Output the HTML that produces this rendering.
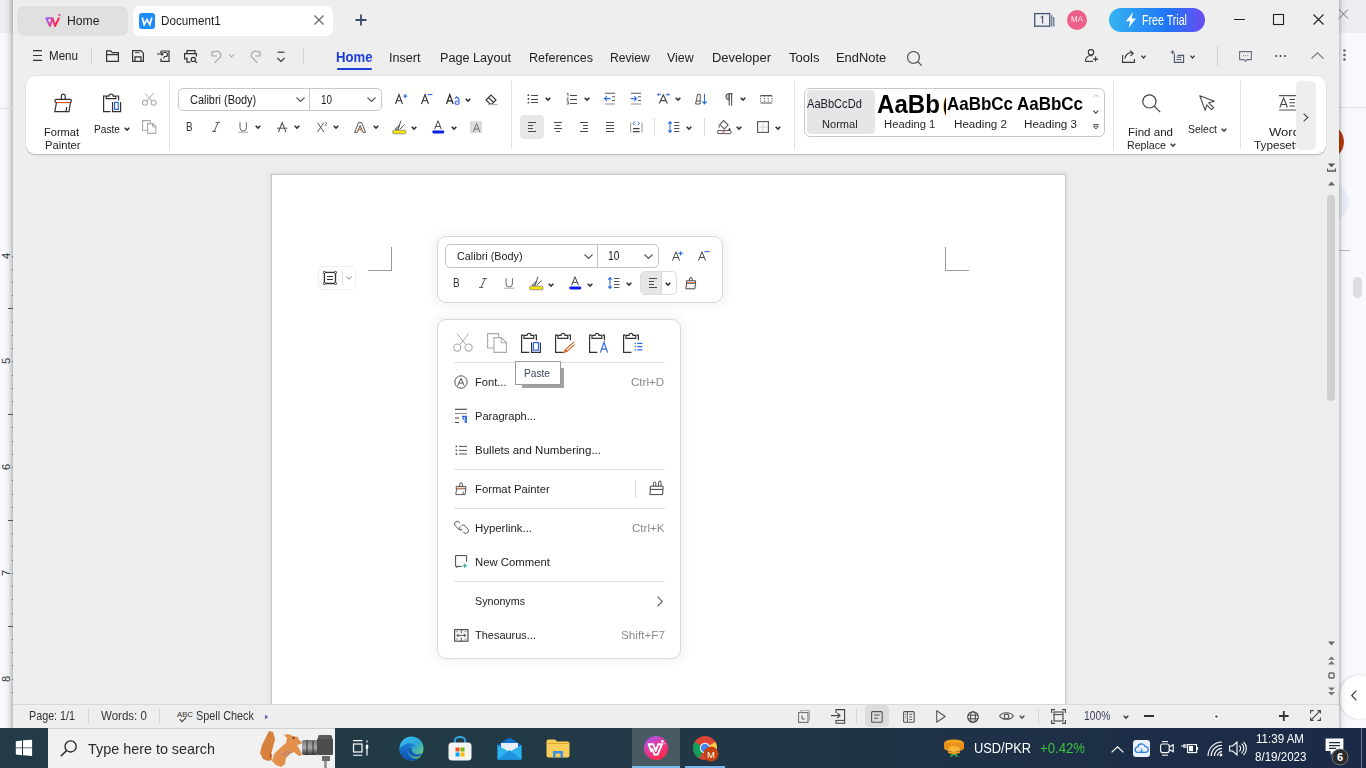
<!DOCTYPE html>
<html><head><meta charset="utf-8"><title>WPS Writer</title>
<style>
*{box-sizing:border-box;margin:0;padding:0}
html,body{width:1366px;height:768px;overflow:hidden;background:#fff;font-family:"Liberation Sans",sans-serif;color:#262626}
.a{position:absolute}
.t{position:absolute;white-space:nowrap;line-height:1;transform-origin:0 0}
svg{position:absolute;overflow:visible}

</style></head><body>
<div class="a" style="left:0px;top:0px;width:13px;height:728px;background:#f8f9fc"></div>
<div class="a" style="left:0px;top:0px;width:13px;height:33px;background:#eceef1"></div>
<div class="a" style="left:1339px;top:0px;width:27px;height:728px;background:#f8f9fc"></div>
<div class="a" style="left:1339px;top:0px;width:27px;height:33px;background:#eceef1"></div>
<div class="a" style="left:4px;top:0px;width:9px;height:728px;background:linear-gradient(90deg,rgba(0,0,0,0),rgba(0,0,0,0.05) 50%,rgba(0,0,0,0.24))"></div>
<div class="a" style="left:12px;top:255.5px;width:1.3px;height:1.3px;background:#444;border-radius:50%"></div>
<div class="a" style="left:12px;top:268.5px;width:1.3px;height:1.3px;background:#444;border-radius:50%"></div>
<div class="a" style="left:12px;top:281.5px;width:1.3px;height:1.3px;background:#444;border-radius:50%"></div>
<div class="a" style="left:12px;top:294.5px;width:1.3px;height:1.3px;background:#444;border-radius:50%"></div>
<div class="a" style="left:8px;top:308px;width:5px;height:1px;background:#555"></div>
<div class="a" style="left:12px;top:321.5px;width:1.3px;height:1.3px;background:#444;border-radius:50%"></div>
<div class="a" style="left:12px;top:334.5px;width:1.3px;height:1.3px;background:#444;border-radius:50%"></div>
<div class="a" style="left:12px;top:347.5px;width:1.3px;height:1.3px;background:#444;border-radius:50%"></div>
<div class="a" style="left:12px;top:360.5px;width:1.3px;height:1.3px;background:#444;border-radius:50%"></div>
<div class="a" style="left:12px;top:374.5px;width:1.3px;height:1.3px;background:#444;border-radius:50%"></div>
<div class="a" style="left:12px;top:387.5px;width:1.3px;height:1.3px;background:#444;border-radius:50%"></div>
<div class="a" style="left:12px;top:400.5px;width:1.3px;height:1.3px;background:#444;border-radius:50%"></div>
<div class="a" style="left:8px;top:414px;width:5px;height:1px;background:#555"></div>
<div class="a" style="left:12px;top:426.5px;width:1.3px;height:1.3px;background:#444;border-radius:50%"></div>
<div class="a" style="left:12px;top:440.5px;width:1.3px;height:1.3px;background:#444;border-radius:50%"></div>
<div class="a" style="left:12px;top:453.5px;width:1.3px;height:1.3px;background:#444;border-radius:50%"></div>
<div class="a" style="left:12px;top:466.5px;width:1.3px;height:1.3px;background:#444;border-radius:50%"></div>
<div class="a" style="left:12px;top:479.5px;width:1.3px;height:1.3px;background:#444;border-radius:50%"></div>
<div class="a" style="left:12px;top:493.5px;width:1.3px;height:1.3px;background:#444;border-radius:50%"></div>
<div class="a" style="left:12px;top:506.5px;width:1.3px;height:1.3px;background:#444;border-radius:50%"></div>
<div class="a" style="left:8px;top:520px;width:5px;height:1px;background:#555"></div>
<div class="a" style="left:12px;top:532.5px;width:1.3px;height:1.3px;background:#444;border-radius:50%"></div>
<div class="a" style="left:12px;top:545.5px;width:1.3px;height:1.3px;background:#444;border-radius:50%"></div>
<div class="a" style="left:12px;top:559.5px;width:1.3px;height:1.3px;background:#444;border-radius:50%"></div>
<div class="a" style="left:12px;top:572.5px;width:1.3px;height:1.3px;background:#444;border-radius:50%"></div>
<div class="a" style="left:12px;top:585.5px;width:1.3px;height:1.3px;background:#444;border-radius:50%"></div>
<div class="a" style="left:12px;top:598.5px;width:1.3px;height:1.3px;background:#444;border-radius:50%"></div>
<div class="a" style="left:12px;top:612.5px;width:1.3px;height:1.3px;background:#444;border-radius:50%"></div>
<div class="a" style="left:8px;top:626px;width:5px;height:1px;background:#555"></div>
<div class="a" style="left:12px;top:638.5px;width:1.3px;height:1.3px;background:#444;border-radius:50%"></div>
<div class="a" style="left:12px;top:651.5px;width:1.3px;height:1.3px;background:#444;border-radius:50%"></div>
<div class="a" style="left:12px;top:664.5px;width:1.3px;height:1.3px;background:#444;border-radius:50%"></div>
<div class="a" style="left:12px;top:678.5px;width:1.3px;height:1.3px;background:#444;border-radius:50%"></div>
<div class="a" style="left:12px;top:691.5px;width:1.3px;height:1.3px;background:#444;border-radius:50%"></div>
<div class="a" style="left:13px;top:0px;width:1326px;height:704px;background:#eeeeee"></div>
<div class="a" style="left:17px;top:6px;width:111px;height:30px;background:#e0e0e0;border-radius:7px"></div>
<svg style="left:44px;top:13px;" width="18" height="15" viewBox="0 0 18 15"><defs><linearGradient id="wg" x1="0" y1="0" x2="1" y2="0.3"><stop offset="0" stop-color="#9064ff"/><stop offset="0.5" stop-color="#e0409a"/><stop offset="1" stop-color="#ff1a3a"/></linearGradient></defs><path d="M2.2 5.3H8.6L6 13Z M8.6 5.3L11 13L15.2 4.6" fill="none" stroke="url(#wg)" stroke-width="1.9" stroke-linejoin="round"/><path d="M14.5 1L15.4 2.4L16.4 1.8" fill="none" stroke="#e0409a" stroke-width="1.3"/></svg>
<div class="t" style="left:67.30px;top:13.67px;font-size:13.37px;color:#1f1f1f;transform:scaleX(0.9110);">Home</div>
<div class="a" style="left:133px;top:6px;width:200px;height:30px;background:#fff;border-radius:7px"></div>
<div class="a" style="left:139px;top:13px;width:16px;height:16px;background:#1e8cf8;border-radius:3px"></div>
<svg style="left:139px;top:13px;" width="16" height="16" viewBox="0 0 16 16"><path d="M3.2 4.5 L5.2 11.5 L8 6.5 L10.8 11.5 L12.8 4.5" fill="none" stroke="#fff" stroke-width="1.7"/></svg>
<div class="t" style="left:161.30px;top:13.80px;font-size:13.23px;color:#1f1f1f;transform:scaleX(0.8841);">Document1</div>
<svg style="left:314px;top:15px;" width="10" height="10" viewBox="0 0 10 10"><path d="M0.5 0.5L9.5 9.5M9.5 0.5L0.5 9.5" stroke="#666" stroke-width="1.2"/></svg>
<svg style="left:355px;top:14px;" width="12" height="12" viewBox="0 0 12 12"><path d="M6 0.5V11.5M0.5 6H11.5" stroke="#3a4a6a" stroke-width="1.8"/></svg>
<svg style="left:1034px;top:12px;" width="22" height="16" viewBox="0 0 22 16"><rect x="0.7" y="1.6" width="15" height="12.6" fill="none" stroke="#44557a" stroke-width="1.3"/><path d="M6.8 5.6L8.6 4.4V11.6" fill="none" stroke="#44557a" stroke-width="1.1"/><path d="M17.8 3.2V14.5M19.8 5V14.5" stroke="#44557a" stroke-width="1"/></svg>
<div class="a" style="left:1067px;top:10px;width:20px;height:20px;border-radius:50%;background:#ec5f86"></div>
<div class="t" style="left:1070.60px;top:15.61px;font-size:8.14px;color:#fde8ee;transform:scaleX(0.9829);">MA</div>
<div class="a" style="left:1109px;top:8px;width:96px;height:24px;border-radius:12px;background:linear-gradient(90deg,#34b4f2,#1f74f6 62%,#6b4cf0)"></div>
<svg style="left:1125px;top:12px;" width="12" height="16" viewBox="0 0 12 16"><path d="M8 0.2 L0.8 9.2 H5.2 L3.6 15.8 L11 6.4 H6.6 Z" fill="#fff"/></svg>
<div class="t" style="left:1141.90px;top:12.69px;font-size:14.53px;color:#fff;transform:scaleX(0.7331);">Free Trial</div>
<svg style="left:1234px;top:19px;" width="11" height="2" viewBox="0 0 11 2"><path d="M0 0.5H11" stroke="#222" stroke-width="1"/></svg>
<svg style="left:1273px;top:14px;" width="11" height="11" viewBox="0 0 11 11"><rect x="0.5" y="0.5" width="10" height="10" fill="none" stroke="#222" stroke-width="1.1"/></svg>
<svg style="left:1313px;top:14px;" width="11" height="11" viewBox="0 0 11 11"><path d="M0.5 0.5L10.5 10.5M10.5 0.5L0.5 10.5" stroke="#222" stroke-width="1.1"/></svg>
<svg style="left:1339px;top:9px;" width="9" height="10" viewBox="0 0 9 10"><path d="M0 0.5L9 9.5M9 0.5L0 9.5" stroke="#777" stroke-width="1"/></svg>
<svg style="left:33px;top:50px;" width="9" height="11" viewBox="0 0 9 11"><path d="M0 0.7H9M0 5.5H9M0 10.3H9" stroke="#333" stroke-width="1.2"/></svg>
<div class="t" style="left:48.90px;top:49.67px;font-size:12.79px;color:#222;transform:scaleX(0.9065);">Menu</div>
<div class="a" style="left:91px;top:48px;width:1px;height:16px;background:#d2d2d2"></div>
<svg style="left:106px;top:50px;" width="13" height="12" viewBox="0 0 13 12"><path d="M0.6 11.4V0.8H4.6L6.3 2.6H12.4V11.4Z M0.6 4.6H12.4" fill="none" stroke="#333" stroke-width="1.2"/></svg>
<svg style="left:132px;top:50px;" width="12" height="12" viewBox="0 0 12 12"><path d="M0.6 0.6H8.8L11.4 3.2V11.4H0.6Z" fill="none" stroke="#333" stroke-width="1.2"/><path d="M3 2.6H7.5" stroke="#555" stroke-width="1.1"/><path d="M3 11.4V6.8H9V11.4" fill="none" stroke="#333" stroke-width="1.2"/></svg>
<svg style="left:157px;top:50px;" width="13" height="12" viewBox="0 0 13 12"><path d="M4 1H12V11.4H4V8.6" fill="none" stroke="#333" stroke-width="1.2"/><path d="M4 1V3.5" stroke="#333" stroke-width="1.2"/><path d="M0 4H6M4.5 2.5L6 4L4.5 5.5" fill="none" stroke="#333" stroke-width="1.1"/><path d="M6.5 2.5H8.5A2 2 0 0 1 8.5 6.5H7.5L6.5 8.5" fill="none" stroke="#333" stroke-width="1.1"/></svg>
<svg style="left:184px;top:50px;" width="14" height="13" viewBox="0 0 14 13"><path d="M3 3.4V0.6H11V3.4" fill="none" stroke="#333" stroke-width="1.2"/><path d="M3 9H0.6V3.6H12.4V6.5" fill="none" stroke="#333" stroke-width="1.2"/><path d="M3 7.5V12.2H6.5" fill="none" stroke="#333" stroke-width="1.2"/><circle cx="9.3" cy="9.4" r="2.1" fill="none" stroke="#333" stroke-width="1.2"/><path d="M10.8 10.9L13 13" stroke="#333" stroke-width="1.1"/></svg>
<svg style="left:211px;top:50px;" width="12" height="13" viewBox="0 0 12 13"><path d="M2 2.5A4.6 4.6 0 0 1 9.8 6.5L3.6 12.8" fill="none" stroke="#a8a8a8" stroke-width="1.2"/><path d="M1 1V6H5.6" fill="none" stroke="#a8a8a8" stroke-width="1.2"/></svg>
<svg style="left:229px;top:54px;" width="5" height="4" viewBox="0 0 5 4"><path d="M0.4 0.6L2.5 3L4.6 0.6" fill="none" stroke="#a8a8a8" stroke-width="1.1"/></svg>
<svg style="left:249px;top:50px;" width="12" height="13" viewBox="0 0 12 13"><path d="M10 2.5A4.6 4.6 0 0 0 2.2 6.5L8.4 12.8" fill="none" stroke="#a8a8a8" stroke-width="1.2"/><path d="M11 1V6H6.4" fill="none" stroke="#a8a8a8" stroke-width="1.2"/></svg>
<svg style="left:277px;top:51px;" width="8" height="11" viewBox="0 0 8 11"><path d="M0.6 1.2H7.4" stroke="#444" stroke-width="1.3"/><path d="M0.4 6.8L4 10.4L7.6 6.8" fill="none" stroke="#333" stroke-width="1.2"/></svg>
<div class="a" style="left:303px;top:47px;width:1px;height:17px;background:#d2d2d2"></div>
<div class="t" style="left:336.30px;top:51.18px;font-size:13.95px;color:#1a3fdc;font-weight:bold;transform:scaleX(0.9416);">Home</div>
<div class="a" style="left:337px;top:68px;width:35px;height:2px;background:#1a3fdc;border-radius:1px"></div>
<div class="t" style="left:389.30px;top:50.55px;font-size:13.52px;color:#222;transform:scaleX(0.9288);">Insert</div>
<div class="t" style="left:439.60px;top:50.55px;font-size:13.52px;color:#222;transform:scaleX(0.9353);">Page Layout</div>
<div class="t" style="left:528.60px;top:50.55px;font-size:13.52px;color:#222;transform:scaleX(0.9258);">References</div>
<div class="t" style="left:609.60px;top:50.55px;font-size:13.52px;color:#222;transform:scaleX(0.8971);">Review</div>
<div class="t" style="left:666.60px;top:50.55px;font-size:13.52px;color:#222;transform:scaleX(0.9179);">View</div>
<div class="t" style="left:711.90px;top:50.55px;font-size:13.52px;color:#222;transform:scaleX(0.9576);">Developer</div>
<div class="t" style="left:788.60px;top:50.55px;font-size:13.52px;color:#222;transform:scaleX(0.9667);">Tools</div>
<div class="t" style="left:835.60px;top:50.55px;font-size:13.52px;color:#222;transform:scaleX(0.9542);">EndNote</div>
<svg style="left:907px;top:51px;" width="15" height="15" viewBox="0 0 15 15"><circle cx="6.5" cy="6.4" r="5.9" fill="none" stroke="#444" stroke-width="1.1"/><path d="M10.7 10.6L14.7 14.7" stroke="#444" stroke-width="1.1"/></svg>
<svg style="left:1085px;top:49px;" width="14" height="13" viewBox="0 0 14 13"><circle cx="6" cy="3.3" r="2.7" fill="none" stroke="#333" stroke-width="1.1"/><path d="M0.6 12.4V11A5 5 0 0 1 7.8 7" fill="none" stroke="#333" stroke-width="1.1"/><path d="M0.6 12.4H8" stroke="#333" stroke-width="1.1"/><path d="M10.6 7.6V12.6M8.1 10.1H13.1" stroke="#333" stroke-width="1.1"/></svg>
<svg style="left:1122px;top:50px;" width="14" height="13" viewBox="0 0 14 13"><path d="M0.6 5V12.4H12.4V9" fill="none" stroke="#333" stroke-width="1.1"/><path d="M3 8.5A6 6 0 0 1 10.5 3" fill="none" stroke="#333" stroke-width="1.1"/><path d="M8 0.6L11.2 3.2L8.6 6" fill="none" stroke="#333" stroke-width="1.1"/></svg>
<svg style="left:1141px;top:55px;" width="5" height="4" viewBox="0 0 5 4"><path d="M0.4 0.6L2.5 3L4.6 0.6" fill="none" stroke="#333" stroke-width="1.2"/></svg>
<svg style="left:1171px;top:50px;" width="14" height="13" viewBox="0 0 14 13"><path d="M3.4 3.6V12.4H12.6V5.4H6.5" fill="none" stroke="#4a5670" stroke-width="1.1"/><path d="M1.6 0.2V4.2M-0.4 2.2H3.6" stroke="#4a5670" stroke-width="1"/><path d="M5.5 7.2H10.5M5.5 9.6H10.5" stroke="#4a5670" stroke-width="1"/></svg>
<svg style="left:1190px;top:55px;" width="5" height="4" viewBox="0 0 5 4"><path d="M0.4 0.6L2.5 3L4.6 0.6" fill="none" stroke="#333" stroke-width="1.2"/></svg>
<div class="a" style="left:1217px;top:46px;width:1px;height:20px;background:#d0d0d0"></div>
<svg style="left:1239px;top:51px;" width="13" height="11" viewBox="0 0 13 11"><path d="M0.6 0.6H12.4V8.6H8L6.5 10.4L5 8.6H0.6Z" fill="none" stroke="#6a7080" stroke-width="1.1"/><path d="M4 4.6H4.8M6.2 4.6H7M8.4 4.6H9.2" stroke="#6a7080" stroke-width="1.1"/></svg>
<svg style="left:1275px;top:55px;" width="11" height="2" viewBox="0 0 11 2"><circle cx="1" cy="1" r="1" fill="#444"/><circle cx="5.5" cy="1" r="1" fill="#444"/><circle cx="10" cy="1" r="1" fill="#444"/></svg>
<svg style="left:1311px;top:52px;" width="13" height="7" viewBox="0 0 13 7"><path d="M0.5 6.5L6.5 0.8L12.5 6.5" fill="none" stroke="#777e8a" stroke-width="1.2"/></svg>
<svg style="left:1343px;top:49px;" width="3" height="12" viewBox="0 0 3 12"><circle cx="1.5" cy="1.5" r="1.3" fill="#666"/><circle cx="1.5" cy="6" r="1.3" fill="#666"/><circle cx="1.5" cy="10.5" r="1.3" fill="#666"/></svg>
<div class="a" style="left:26px;top:76px;width:1300px;height:78px;background:#fff;border-radius:9px;box-shadow:0 0 0 0.5px rgba(0,0,0,0.07),0 1px 0.5px rgba(0,0,0,0.11),0 2px 2px rgba(0,0,0,0.06)"></div>
<svg style="left:54px;top:93px;" width="18" height="20" viewBox="0 0 18 20"><path d="M7.4 6.2V3A1.8 1.8 0 0 1 11.2 3V6.2" fill="none" stroke="#333" stroke-width="1.2"/><rect x="1" y="6.3" width="16.3" height="3.2" rx="1.3" fill="none" stroke="#333" stroke-width="1.2"/><path d="M2.3 9.6H16" stroke="#d4581c" stroke-width="1.1"/><path d="M2.4 9.8L0.8 18.6H15L16.4 9.8" fill="none" stroke="#333" stroke-width="1.2"/><path d="M12.8 14L12 18.4" stroke="#333" stroke-width="1.2"/></svg>
<div class="t" style="left:44.40px;top:125.75px;font-size:11.63px;color:#222;transform:scaleX(0.9504);">Format</div>
<div class="t" style="left:45.10px;top:138.95px;font-size:11.63px;color:#222;transform:scaleX(0.9637);">Painter</div>
<svg style="left:103px;top:93px;" width="18" height="19" viewBox="0 0 18 19"><path d="M3 3H0.6V18.6H7.6" fill="none" stroke="#333" stroke-width="1.2"/><path d="M13.4 3H15.6V7.6" fill="none" stroke="#333" stroke-width="1.2"/><path d="M3.2 5.6V3.2H5.8A2.2 2.2 0 0 1 10.2 3.2H12.8V5.6Z" fill="none" stroke="#333" stroke-width="1.2"/><path d="M9.6 9V18.6H17.6V9" fill="none" stroke="#333" stroke-width="1.2"/><rect x="11.6" y="9.4" width="3.6" height="7" fill="none" stroke="#2d6ae8" stroke-width="1.2"/></svg>
<div class="t" style="left:94.20px;top:123.15px;font-size:11.63px;color:#222;transform:scaleX(0.8711);">Paste</div>
<svg style="left:124px;top:127px;" width="6" height="4" viewBox="0 0 6 4"><path d="M0.7 0.7L3 3.1L5.3 0.7" fill="none" stroke="#333" stroke-width="1.6"/></svg>
<svg style="left:142px;top:93px;" width="15" height="13" viewBox="0 0 15 13"><path d="M3.2 0.3L9.6 8M11.4 0.3L5 8" stroke="#a8a8a8" stroke-width="1"/><circle cx="3" cy="9.8" r="2.5" fill="none" stroke="#a8a8a8" stroke-width="1.1"/><circle cx="11.6" cy="9.8" r="2.5" fill="none" stroke="#a8a8a8" stroke-width="1.1"/></svg>
<svg style="left:142px;top:120px;" width="15" height="14" viewBox="0 0 15 14"><path d="M5.3 10.3H0.6V0.6H8.2V3.6" fill="none" stroke="#a8a8a8" stroke-width="1.1"/><path d="M5.6 3.6H10.8L13.8 6.6V13.4H5.6Z" fill="none" stroke="#a8a8a8" stroke-width="1.1"/><path d="M10.6 3.8V6.8H13.6" fill="none" stroke="#a8a8a8" stroke-width="1"/></svg>
<div class="a" style="left:169px;top:81px;width:1px;height:69px;background:#e2e2e2"></div>
<div class="a" style="left:178px;top:88px;width:204px;height:23px;border:1px solid #c9c9c9;border-radius:5px;background:#fff"></div>
<div class="a" style="left:309px;top:88px;width:1px;height:23px;background:#c9c9c9"></div>
<div class="t" style="left:190.00px;top:93.78px;font-size:12.06px;color:#222;transform:scaleX(0.9073);">Calibri (Body)</div>
<svg style="left:296px;top:97px;" width="9" height="5" viewBox="0 0 9 5"><path d="M0.5 0.5L4.5 4.5L8.5 0.5" fill="none" stroke="#555" stroke-width="1.1"/></svg>
<div class="t" style="left:320.60px;top:93.78px;font-size:12.06px;color:#222;transform:scaleX(0.8200);">10</div>
<svg style="left:367px;top:97px;" width="9" height="5" viewBox="0 0 9 5"><path d="M0.5 0.5L4.5 4.5L8.5 0.5" fill="none" stroke="#555" stroke-width="1.1"/></svg>
<svg style="left:394.7px;top:94px;" width="12" height="11" viewBox="0 0 12 11"><path d="M0.5 10L4 0.6L7.5 10M1.7 6.8H6.3" fill="none" stroke="#333" stroke-width="1.1"/><path d="M10.2 0V4.2M8.2 2.1H12.2" stroke="#2d6ae8" stroke-width="1.1"/></svg>
<svg style="left:420.8px;top:94px;" width="12" height="11" viewBox="0 0 12 11"><path d="M0.5 10L4 0.6L7.5 10M1.7 6.8H6.3" fill="none" stroke="#333" stroke-width="1.1"/><path d="M6.5 0.6H11.5" stroke="#2d6ae8" stroke-width="1.1"/></svg>
<svg style="left:446px;top:94px;" width="15" height="11" viewBox="0 0 15 11"><path d="M0.5 10L3.8 0.6L7.1 10M1.7 6.8H6" fill="none" stroke="#222" stroke-width="1.2"/><path d="M8.8 4.6A2.3 2.3 0 0 1 13 5.6V10M13 7.2H10.6A1.5 1.5 0 0 0 10.6 10.2H13" fill="none" stroke="#2d6ae8" stroke-width="1.1"/><path d="M10 1.8L11.4 3.4" stroke="#2d6ae8" stroke-width="0.9"/></svg>
<svg style="left:465px;top:98px;" width="6" height="4" viewBox="0 0 6 4"><path d="M0.7 0.7L3 3.1L5.3 0.7" fill="none" stroke="#333" stroke-width="1.6"/></svg>
<svg style="left:485px;top:94px;" width="13" height="11" viewBox="0 0 13 11"><path d="M1 6L6 1L11 6L7 10H5Z M3.5 3.5L8.6 8.4" fill="none" stroke="#333" stroke-width="1.1"/><path d="M3 10.6H12.6" stroke="#b0b0b0" stroke-width="1.1"/></svg>
<div class="a" style="left:511px;top:81px;width:1px;height:69px;background:#e2e2e2"></div>
<div class="t" style="left:186.20px;top:120.23px;font-size:13.66px;color:#333;transform:scaleX(0.7242);">B</div>
<svg style="left:211px;top:122px;" width="10" height="10" viewBox="0 0 10 10"><path d="M1 9.4H5.2M4.6 0.6H9M7 0.6L3.2 9.4" fill="none" stroke="#555" stroke-width="1"/></svg>
<svg style="left:238px;top:122px;" width="11" height="11" viewBox="0 0 11 11"><path d="M2 0.3V5.8A3.2 3.2 0 0 0 8.4 5.8V0.3" fill="none" stroke="#666" stroke-width="1"/><path d="M0.4 10.2H10" stroke="#aaa" stroke-width="1.1"/></svg>
<svg style="left:255px;top:125px;" width="6" height="4" viewBox="0 0 6 4"><path d="M0.7 0.7L3 3.1L5.3 0.7" fill="none" stroke="#333" stroke-width="1.6"/></svg>
<svg style="left:277px;top:122px;" width="11" height="11" viewBox="0 0 11 11"><path d="M1.5 10L5.2 0.6L8.9 10" fill="none" stroke="#555" stroke-width="1.1"/><path d="M0 6.2H10.4" stroke="#555" stroke-width="1"/></svg>
<svg style="left:294px;top:125px;" width="6" height="4" viewBox="0 0 6 4"><path d="M0.7 0.7L3 3.1L5.3 0.7" fill="none" stroke="#333" stroke-width="1.6"/></svg>
<svg style="left:316.8px;top:122px;" width="11" height="11" viewBox="0 0 11 11"><path d="M0.5 0.6L6.8 10M6.8 0.6L0.5 10" stroke="#555" stroke-width="1"/><path d="M7.8 0.8A0.9 0.9 0 0 1 9.5 1.2L7.8 3.2H9.8" fill="none" stroke="#555" stroke-width="0.7"/></svg>
<svg style="left:333px;top:125px;" width="6" height="4" viewBox="0 0 6 4"><path d="M0.7 0.7L3 3.1L5.3 0.7" fill="none" stroke="#333" stroke-width="1.6"/></svg>
<svg style="left:354px;top:122px;" width="13" height="11" viewBox="0 0 13 11"><path d="M0.6 10.4L4.6 0.6H7.6L11.6 10.4H9L6.1 3.6L3.2 10.4Z" fill="none" stroke="#555" stroke-width="1"/><path d="M4.8 8.6L6.1 5.5L7.4 8.6Z" fill="#e8742c"/></svg>
<svg style="left:373px;top:125px;" width="6" height="4" viewBox="0 0 6 4"><path d="M0.7 0.7L3 3.1L5.3 0.7" fill="none" stroke="#333" stroke-width="1.6"/></svg>
<svg style="left:392px;top:120px;" width="15" height="15" viewBox="0 0 15 15"><path d="M5.5 10.5L9 0.6M3 9.2L7.5 5.2L6 9.5Z M7.5 9.5L12.6 4.6" fill="none" stroke="#555" stroke-width="1"/><rect x="0.6" y="10.2" width="13.4" height="3.6" rx="1.5" fill="#f6e600" stroke="#777" stroke-width="0.7"/></svg>
<svg style="left:411px;top:126px;" width="6" height="4" viewBox="0 0 6 4"><path d="M0.7 0.7L3 3.1L5.3 0.7" fill="none" stroke="#333" stroke-width="1.6"/></svg>
<svg style="left:432px;top:120px;" width="13" height="15" viewBox="0 0 13 15"><path d="M2.6 9.2L6 0.8L9.4 9.2M3.8 6.4H8.2" fill="none" stroke="#444" stroke-width="1"/><rect x="0.3" y="10.4" width="12" height="3" rx="1.4" fill="#0a1ee6"/></svg>
<svg style="left:451px;top:126px;" width="6" height="4" viewBox="0 0 6 4"><path d="M0.7 0.7L3 3.1L5.3 0.7" fill="none" stroke="#333" stroke-width="1.6"/></svg>
<div class="a" style="left:470px;top:121px;width:12px;height:12px;background:#dcdcdc"></div>
<svg style="left:472.5px;top:122.5px;" width="8" height="10" viewBox="0 0 8 10"><path d="M0.4 9L3.6 0.4L6.8 9M1.5 6H5.7" fill="none" stroke="#666" stroke-width="0.9"/></svg>
<svg style="left:527px;top:94px;" width="12" height="10" viewBox="0 0 12 10"><circle cx="1.4" cy="1.2" r="0.9" fill="#444"/><circle cx="1.4" cy="5" r="0.9" fill="#444"/><circle cx="1.4" cy="8.6" r="0.9" fill="#444"/><path d="M4 1.5H11M4 5.5H11M4 8.5H11" stroke="#4a4a4a" stroke-width="1"/></svg>
<svg style="left:545px;top:97px;" width="6" height="4" viewBox="0 0 6 4"><path d="M0.7 0.7L3 3.1L5.3 0.7" fill="none" stroke="#333" stroke-width="1.6"/></svg>
<svg style="left:566px;top:93px;" width="12" height="12" viewBox="0 0 12 12"><path d="M1 0.8L2 0.3V3.2" fill="none" stroke="#444" stroke-width="0.8"/><path d="M0.8 4.8H2.4L0.8 7.2H2.6M0.8 8.8H2.5V11.2H0.8M1.2 10H2.4" fill="none" stroke="#444" stroke-width="0.7"/><path d="M4 2.5H11M4 6.5H11M4 10.5H11" stroke="#4a4a4a" stroke-width="1"/></svg>
<svg style="left:584px;top:97px;" width="6" height="4" viewBox="0 0 6 4"><path d="M0.7 0.7L3 3.1L5.3 0.7" fill="none" stroke="#333" stroke-width="1.6"/></svg>
<svg style="left:604px;top:92px;" width="12" height="13" viewBox="0 0 12 13"><path d="M1 1.2H11M8 4.8H11M8 8.5H11" stroke="#555" stroke-width="1.1"/><path d="M1 12H11" stroke="#aaa" stroke-width="1.3"/><path d="M0.6 6.6H6.5M3 4L0.6 6.6L3 9.2" fill="none" stroke="#2d6ae8" stroke-width="1.1"/></svg>
<svg style="left:630px;top:92px;" width="12" height="13" viewBox="0 0 12 13"><path d="M1 1.2H11M8 4.8H11M8 8.5H11" stroke="#555" stroke-width="1.1"/><path d="M1 12H11" stroke="#aaa" stroke-width="1.3"/><path d="M0.6 6.6H6.6M4.2 4L6.6 6.6L4.2 9.2" fill="none" stroke="#2d6ae8" stroke-width="1.1"/></svg>
<svg style="left:657px;top:93px;" width="13" height="12" viewBox="0 0 13 12"><path d="M2.3 10.6L6.3 1.8L10.3 10.6M3.6 7.6H9" fill="none" stroke="#444" stroke-width="1.1"/><path d="M0.4 1.6H4M1.8 0.2L0.4 1.6L1.8 3M8.6 1.6H12.2M10.8 0.2L12.2 1.6L10.8 3" fill="none" stroke="#2d6ae8" stroke-width="0.9"/></svg>
<svg style="left:675px;top:97px;" width="6" height="4" viewBox="0 0 6 4"><path d="M0.7 0.7L3 3.1L5.3 0.7" fill="none" stroke="#333" stroke-width="1.6"/></svg>
<svg style="left:695px;top:93px;" width="11" height="12" viewBox="0 0 11 12"><path d="M0.6 11L2.6 1.4H5.2V11Z M1.2 8H5" fill="none" stroke="#555" stroke-width="1"/><path d="M9.5 0.8V10.6M7.4 8.4L9.5 10.8L11.6 8.4" fill="none" stroke="#2d6ae8" stroke-width="1.1"/></svg>
<svg style="left:724px;top:93px;" width="9" height="13" viewBox="0 0 9 13"><path d="M4.6 0.6H8.6M5.2 0.6V12.4M7.6 0.6V12.4" stroke="#555" stroke-width="1.1"/><path d="M5 0.8A3 3 0 0 0 5 6.8Z" fill="#ccc" stroke="#555" stroke-width="1.1"/></svg>
<svg style="left:740px;top:97px;" width="6" height="4" viewBox="0 0 6 4"><path d="M0.7 0.7L3 3.1L5.3 0.7" fill="none" stroke="#333" stroke-width="1.6"/></svg>
<svg style="left:760px;top:95px;" width="13" height="9" viewBox="0 0 13 9"><path d="M0.6 0.6H12M0.6 8H12" stroke="#555" stroke-width="1.1"/><path d="M0.6 0.6V8M4.4 0.6V8M8.2 0.6V8M12 0.6V8" stroke="#555" stroke-width="1" stroke-dasharray="1.2 1.2"/></svg>
<div class="a" style="left:520px;top:115px;width:24px;height:24px;background:#e7e7e7;border-radius:4px"></div>
<svg style="left:528px;top:122px;" width="9" height="11" viewBox="0 0 9 11"><path d="M0 0.5H8" stroke="#4a4a4a" stroke-width="1.0"/><path d="M0 3.5H5" stroke="#4a4a4a" stroke-width="1.0"/><path d="M0 6.5H5" stroke="#4a4a4a" stroke-width="1.0"/><path d="M0 9.5H8" stroke="#4a4a4a" stroke-width="1.0"/></svg>
<svg style="left:554px;top:122px;" width="9" height="11" viewBox="0 0 9 11"><path d="M0.0 0.5H8.0" stroke="#4a4a4a" stroke-width="1.0"/><path d="M1.5 3.5H6.5" stroke="#4a4a4a" stroke-width="1.0"/><path d="M0.0 6.5H8.0" stroke="#4a4a4a" stroke-width="1.0"/><path d="M2.0 9.5H6.0" stroke="#4a4a4a" stroke-width="1.0"/></svg>
<svg style="left:580px;top:122px;" width="9" height="11" viewBox="0 0 9 11"><path d="M0 0.5H8" stroke="#4a4a4a" stroke-width="1.0"/><path d="M3 3.5H8" stroke="#4a4a4a" stroke-width="1.0"/><path d="M3 6.5H8" stroke="#4a4a4a" stroke-width="1.0"/><path d="M0 9.5H8" stroke="#4a4a4a" stroke-width="1.0"/></svg>
<svg style="left:606px;top:122px;" width="9" height="11" viewBox="0 0 9 11"><path d="M0 0.5H8" stroke="#4a4a4a" stroke-width="1.0"/><path d="M0 3.5H8" stroke="#4a4a4a" stroke-width="1.0"/><path d="M0 6.5H8" stroke="#4a4a4a" stroke-width="1.0"/><path d="M0 9.5H8" stroke="#4a4a4a" stroke-width="1.0"/></svg>
<svg style="left:630px;top:121px;" width="13" height="12" viewBox="0 0 13 12"><path d="M0.6 1.5V11.4M12 1.5V11.4" stroke="#aaa" stroke-width="1.2"/><path d="M3 7.6H9.6M3 10.6H9.6" stroke="#444" stroke-width="1.2"/><path d="M4.6 0.6L3.4 2.4L4.6 4.2M8 0.6L9.2 2.4L8 4.2" fill="none" stroke="#2d6ae8" stroke-width="1"/></svg>
<div class="a" style="left:654px;top:118px;width:1px;height:18px;background:#dcdcdc"></div>
<svg style="left:668px;top:121px;" width="12" height="12" viewBox="0 0 12 12"><path d="M2 1V11M0.3 2.6L2 0.6L3.7 2.6M0.3 9.4L2 11.4L3.7 9.4" fill="none" stroke="#2d6ae8" stroke-width="1.1"/><path d="M6 1.5H11.4M6 4.5H11.4M6 7.5H11.4M6 10.5H11.4" stroke="#555" stroke-width="1"/></svg>
<svg style="left:686px;top:126px;" width="6" height="4" viewBox="0 0 6 4"><path d="M0.7 0.7L3 3.1L5.3 0.7" fill="none" stroke="#333" stroke-width="1.6"/></svg>
<div class="a" style="left:704px;top:118px;width:1px;height:18px;background:#dcdcdc"></div>
<svg style="left:717px;top:120px;" width="15" height="15" viewBox="0 0 15 15"><path d="M2.8 4.6L6.6 0.6L11 4.8L7.4 9Z" fill="none" stroke="#555" stroke-width="1.1"/><path d="M3 4.8A2 2 0 0 0 2.6 8" fill="none" stroke="#555" stroke-width="1"/><path d="M12.4 7.4L13.6 9.8A1 1 0 0 1 11.4 9.8Z" fill="#333"/><path d="M0.8 10.6H12.8A1.2 1.2 0 0 1 12.8 13.6H0.8Z" fill="none" stroke="#555" stroke-width="1"/><path d="M5 13.3L7.8 11" stroke="#e8334a" stroke-width="1"/></svg>
<svg style="left:736px;top:126px;" width="6" height="4" viewBox="0 0 6 4"><path d="M0.7 0.7L3 3.1L5.3 0.7" fill="none" stroke="#333" stroke-width="1.6"/></svg>
<svg style="left:757px;top:121px;" width="12" height="12" viewBox="0 0 12 12"><rect x="0.6" y="0.6" width="10.8" height="10.8" fill="none" stroke="#555" stroke-width="1.1"/><path d="M6 1.5V10.5M1.5 6H10.5" stroke="#c6c6c6" stroke-width="0.8"/></svg>
<svg style="left:775px;top:126px;" width="6" height="4" viewBox="0 0 6 4"><path d="M0.7 0.7L3 3.1L5.3 0.7" fill="none" stroke="#333" stroke-width="1.6"/></svg>
<div class="a" style="left:794px;top:81px;width:1px;height:69px;background:#e2e2e2"></div>
<div class="a" style="left:804px;top:88px;width:301px;height:49px;border:1px solid #c9c9c9;border-radius:6px"></div>
<div class="a" style="left:807px;top:90px;width:68px;height:44px;background:#e6e6e6;border-radius:4px"></div>
<div class="t" style="left:807.10px;top:97.58px;font-size:12.06px;color:#1a1a2a;transform:scaleX(0.9199);">AaBbCcDd</div>
<div class="t" style="left:822.10px;top:119.24px;font-size:11.05px;color:#262626;transform:scaleX(1.0027);">Normal</div>
<div class="t" style="left:876.50px;top:91.79px;font-size:25.87px;color:#000;font-weight:bold;transform:scaleX(0.9311);">AaBb</div>
<div class="a" style="left:942px;top:92px;width:4px;height:24px;overflow:hidden"><div class="t" style="left:0.60px;top:0.77px;font-size:24.71px;color:#000;font-weight:bold;">(</div></div>
<div class="t" style="left:884.10px;top:119.24px;font-size:11.05px;color:#262626;transform:scaleX(1.0186);">Heading 1</div>
<div class="a" style="left:946px;top:88px;width:70px;height:30px;overflow:hidden"><div class="t" style="left:0.60px;top:6.89px;font-size:18.31px;color:#000;font-weight:bold;transform:scaleX(0.9264);">AaBbCc</div></div>
<div class="t" style="left:953.60px;top:119.24px;font-size:11.05px;color:#262626;transform:scaleX(1.0524);">Heading 2</div>
<div class="t" style="left:1016.60px;top:94.89px;font-size:18.31px;color:#000;font-weight:bold;transform:scaleX(0.9264);">AaBbCc</div>
<div class="t" style="left:1023.60px;top:119.24px;font-size:11.05px;color:#262626;transform:scaleX(1.0524);">Heading 3</div>
<svg style="left:1093px;top:94px;" width="6" height="4" viewBox="0 0 6 4"><path d="M0.4 3.2L2.8 0.6L5.2 3.2" fill="none" stroke="#bbb" stroke-width="1"/></svg>
<svg style="left:1093px;top:110px;" width="6" height="4" viewBox="0 0 6 4"><path d="M0.4 0.6L2.8 3.2L5.2 0.6" fill="none" stroke="#444" stroke-width="1.2"/></svg>
<svg style="left:1093px;top:124px;" width="6" height="6" viewBox="0 0 6 6"><path d="M0.3 0.5H5.5" stroke="#555" stroke-width="1"/><path d="M0.4 2.2L2.9 5L5.4 2.2Z" fill="none" stroke="#555" stroke-width="1"/></svg>
<div class="a" style="left:1113px;top:81px;width:1px;height:69px;background:#e2e2e2"></div>
<svg style="left:1142px;top:94px;" width="19" height="19" viewBox="0 0 19 19"><circle cx="7.4" cy="7.4" r="6.6" fill="none" stroke="#444" stroke-width="1.2"/><path d="M12.2 12.2L18.2 18.2" stroke="#444" stroke-width="1.2"/></svg>
<div class="t" style="left:1127.60px;top:126.05px;font-size:11.63px;color:#222;transform:scaleX(0.9943);">Find and</div>
<div class="t" style="left:1126.60px;top:138.65px;font-size:11.63px;color:#222;transform:scaleX(0.9141);">Replace</div>
<svg style="left:1170px;top:143px;" width="6" height="4" viewBox="0 0 6 4"><path d="M0.7 0.7L3 3.1L5.3 0.7" fill="none" stroke="#444" stroke-width="1.6"/></svg>
<svg style="left:1199px;top:95px;" width="17" height="17" viewBox="0 0 17 17"><path d="M0.8 0.8L15.4 6.2L9.8 7.8L14.6 12.6L12.6 14.6L7.8 9.8L6.2 15.4Z" fill="none" stroke="#444" stroke-width="1.1" stroke-linejoin="round"/></svg>
<div class="t" style="left:1188.10px;top:122.85px;font-size:11.63px;color:#222;transform:scaleX(0.8974);">Select</div>
<svg style="left:1221px;top:128px;" width="6" height="4" viewBox="0 0 6 4"><path d="M0.7 0.7L3 3.1L5.3 0.7" fill="none" stroke="#444" stroke-width="1.6"/></svg>
<div class="a" style="left:1240px;top:81px;width:1px;height:69px;background:#e2e2e2"></div>
<div class="a" style="left:1250px;top:85px;width:46px;height:68px;overflow:hidden"><svg style="left:29px;top:10px;" width="18" height="16" viewBox="0 0 18 16"><path d="M0 0.6H17M0 15H17" stroke="#555" stroke-width="1.1"/><path d="M0.8 12.5L4.6 3L8.4 12.5M2 9.5H7.2" fill="none" stroke="#444" stroke-width="1.1"/><path d="M10.5 4.5H16M10.5 7.8H16M10.5 11H16" stroke="#444" stroke-width="1.1"/></svg><div class="t" style="left:18.60px;top:41.05px;font-size:11.63px;color:#222;transform:scaleX(1.1244);">Word</div><div class="t" style="left:3.60px;top:53.65px;font-size:11.63px;color:#222;transform:scaleX(1.0090);">Typesetting</div></div>
<div class="a" style="left:1296px;top:81px;width:20px;height:69px;background:#eeeeee;border-radius:5px"></div>
<svg style="left:1303px;top:113px;" width="6" height="9" viewBox="0 0 6 9"><path d="M0.6 0.6L4.8 4.5L0.6 8.4" fill="none" stroke="#444" stroke-width="1.1"/></svg>
<div class="a" style="left:271px;top:174px;width:795px;height:560px;background:#fff;border:1px solid #c6c6c6;box-shadow:0 0 2px 1px rgba(0,0,0,0.05),0 0 7px 2px rgba(0,0,0,0.035)"></div>
<div class="a" style="left:391px;top:247px;width:1px;height:24px;background:#9a9a9a"></div>
<div class="a" style="left:368px;top:270px;width:24px;height:1px;background:#9a9a9a"></div>
<div class="a" style="left:945px;top:247px;width:1px;height:24px;background:#9a9a9a"></div>
<div class="a" style="left:945px;top:270px;width:24px;height:1px;background:#9a9a9a"></div>
<div class="a" style="left:318px;top:266px;width:38px;height:24px;border:1px solid #efefef;border-radius:5px;background:#fff"></div>
<svg style="left:323px;top:271px;" width="14" height="14" viewBox="0 0 14 14"><path d="M1.4 1.4H12.5V12.5H1.4Z" fill="none" stroke="#333" stroke-width="1.3"/><circle cx="1.4" cy="1.4" r="1.1" fill="#fff" stroke="#333" stroke-width="0.9"/><circle cx="12.5" cy="1.4" r="1.1" fill="#fff" stroke="#333" stroke-width="0.9"/><circle cx="1.4" cy="12.5" r="1.1" fill="#fff" stroke="#333" stroke-width="0.9"/><circle cx="12.5" cy="12.5" r="1.1" fill="#fff" stroke="#333" stroke-width="0.9"/><path d="M4 5.5H10M4 8.5H10" stroke="#333" stroke-width="1.2"/></svg>
<div class="a" style="left:342px;top:271px;width:1px;height:14px;background:#dedede"></div>
<svg style="left:346px;top:276px;" width="6" height="4" viewBox="0 0 6 4"><path d="M0.4 0.5L3 3.3L5.6 0.5" fill="none" stroke="#888" stroke-width="1"/></svg>
<div class="a" style="left:437px;top:236px;width:286px;height:67px;background:#fff;border:1px solid #d6d6d6;border-radius:9px;box-shadow:0 0 10px 4px rgba(0,0,0,0.045)"></div>
<div class="a" style="left:445px;top:244px;width:214px;height:24px;border:1px solid #c4c4c4;border-radius:5px"></div>
<div class="a" style="left:597px;top:244px;width:1px;height:24px;background:#c4c4c4"></div>
<div class="t" style="left:457.20px;top:251.17px;font-size:11.48px;color:#222;transform:scaleX(0.9446);">Calibri (Body)</div>
<svg style="left:584px;top:254px;" width="9" height="5" viewBox="0 0 9 5"><path d="M0.5 0.5L4.5 4.5L8.5 0.5" fill="none" stroke="#555" stroke-width="1.1"/></svg>
<div class="t" style="left:608.35px;top:250.07px;font-size:12.79px;color:#222;transform:scaleX(0.8015);">10</div>
<svg style="left:644px;top:254px;" width="9" height="5" viewBox="0 0 9 5"><path d="M0.5 0.5L4.5 4.5L8.5 0.5" fill="none" stroke="#555" stroke-width="1.1"/></svg>
<svg style="left:672px;top:251px;" width="12" height="11" viewBox="0 0 12 11"><path d="M0.5 9.6L4 0.8L7.5 9.6M1.7 6.6H6.3" fill="none" stroke="#444" stroke-width="1"/><path d="M8.6 0.2V4.6M6.4 2.4H10.8" stroke="#2d6ae8" stroke-width="1.1"/></svg>
<svg style="left:697.5px;top:251px;" width="12" height="11" viewBox="0 0 12 11"><path d="M0.5 9.6L4 0.8L7.5 9.6M1.7 6.6H6.3" fill="none" stroke="#444" stroke-width="1"/><path d="M6.5 0.6H11.6" stroke="#2d6ae8" stroke-width="1.1"/></svg>
<div class="t" style="left:453.20px;top:276.42px;font-size:13.08px;color:#333;transform:scaleX(0.7564);">B</div>
<svg style="left:478px;top:278px;" width="10" height="10" viewBox="0 0 10 10"><path d="M1 9.4H5.2M4.6 0.6H9M7 0.6L3.2 9.4" fill="none" stroke="#555" stroke-width="1"/></svg>
<svg style="left:504px;top:278px;" width="11" height="11" viewBox="0 0 11 11"><path d="M2 0.3V5.8A3.2 3.2 0 0 0 8.4 5.8V0.3" fill="none" stroke="#666" stroke-width="1"/><path d="M0.4 10.2H10" stroke="#aaa" stroke-width="1.1"/></svg>
<svg style="left:529px;top:276px;" width="15" height="15" viewBox="0 0 15 15"><path d="M5.5 10.5L9 0.6M3 9.2L7.5 5.2L6 9.5Z M7.5 9.5L12.6 4.6" fill="none" stroke="#555" stroke-width="1"/><rect x="0.6" y="10.2" width="13.4" height="3.6" rx="1.5" fill="#f6e600" stroke="#777" stroke-width="0.7"/></svg>
<svg style="left:548px;top:283px;" width="6" height="4" viewBox="0 0 6 4"><path d="M0.7 0.7L3 3.1L5.3 0.7" fill="none" stroke="#333" stroke-width="1.6"/></svg>
<svg style="left:569px;top:276px;" width="13" height="15" viewBox="0 0 13 15"><path d="M2.6 9.2L6 0.8L9.4 9.2M3.8 6.4H8.2" fill="none" stroke="#444" stroke-width="1"/><rect x="0.3" y="10.4" width="12" height="3" rx="1.4" fill="#0a1ee6"/></svg>
<svg style="left:587px;top:283px;" width="6" height="4" viewBox="0 0 6 4"><path d="M0.7 0.7L3 3.1L5.3 0.7" fill="none" stroke="#333" stroke-width="1.6"/></svg>
<svg style="left:608px;top:277px;" width="12" height="12" viewBox="0 0 12 12"><path d="M2 1V11M0.3 2.6L2 0.6L3.7 2.6M0.3 9.4L2 11.4L3.7 9.4" fill="none" stroke="#2d6ae8" stroke-width="1.1"/><path d="M6 1.5H11.4M6 4.5H11.4M6 7.5H11.4M6 10.5H11.4" stroke="#555" stroke-width="1.1"/></svg>
<svg style="left:626px;top:282px;" width="6" height="4" viewBox="0 0 6 4"><path d="M0.7 0.7L3 3.1L5.3 0.7" fill="none" stroke="#333" stroke-width="1.6"/></svg>
<div class="a" style="left:640px;top:271px;width:37px;height:24px;border:1px solid #dcdcdc;border-radius:5px;background:#fff;overflow:hidden"></div>
<div class="a" style="left:641px;top:272px;width:21px;height:22px;background:#e6e6e6;border-radius:4px 0 0 4px"></div>
<div class="a" style="left:661px;top:272px;width:1px;height:22px;background:#d8d8d8"></div>
<svg style="left:649px;top:277px;" width="9" height="11" viewBox="0 0 9 11"><path d="M0 1.5H8" stroke="#4a4a4a" stroke-width="1.0"/><path d="M0 4.5H5" stroke="#4a4a4a" stroke-width="1.0"/><path d="M0 7.5H5" stroke="#4a4a4a" stroke-width="1.0"/><path d="M0 10.5H8" stroke="#4a4a4a" stroke-width="1.0"/></svg>
<svg style="left:665px;top:282px;" width="6" height="4" viewBox="0 0 6 4"><path d="M0.7 0.7L3 3.1L5.3 0.7" fill="none" stroke="#333" stroke-width="1.6"/></svg>
<svg style="left:685px;top:277px;" width="12" height="13" viewBox="0 0 12 13"><path d="M4.4 3.6V2A1.4 1.4 0 0 1 7.2 2V3.6" fill="none" stroke="#444" stroke-width="1"/><path d="M1.4 3.8H10.6V6.2H1.4Z" fill="none" stroke="#444" stroke-width="1"/><path d="M2 5.6H10" stroke="#e8742c" stroke-width="0.9"/><path d="M1.6 6.2L0.8 11.8H9.8L10.6 6.2" fill="none" stroke="#444" stroke-width="1"/></svg>
<div class="a" style="left:437px;top:319px;width:244px;height:340px;background:#fff;border:1px solid #d8d8d8;border-radius:9px;box-shadow:0 0 10px 4px rgba(0,0,0,0.045)"></div>
<svg style="left:453px;top:333px;" width="20" height="19" viewBox="0 0 20 19"><path d="M4 0.6L12.6 11.4M15.6 0.6L7 11.4" stroke="#a8a8a8" stroke-width="1"/><circle cx="4.2" cy="14.6" r="3.6" fill="none" stroke="#a8a8a8" stroke-width="1.1"/><circle cx="15.6" cy="14.6" r="3.6" fill="none" stroke="#a8a8a8" stroke-width="1.1"/></svg>
<svg style="left:487px;top:333px;" width="20" height="20" viewBox="0 0 20 20"><path d="M6.5 15H0.6V0.6H11.6V4.5" fill="none" stroke="#a8a8a8" stroke-width="1.1"/><path d="M6.9 4.6H14.4L19.4 9.6V19.4H6.9Z" fill="none" stroke="#a8a8a8" stroke-width="1.1"/><path d="M14.2 4.8V9.8H19.2" fill="none" stroke="#a8a8a8" stroke-width="1"/></svg>
<svg style="left:521px;top:332px;" width="21" height="21" viewBox="0 0 21 21"><path d="M2.6 3.2H0.6V20.4H8.4" fill="none" stroke="#333" stroke-width="1.2"/><path d="M13.6 3.2H15.4V8.2" fill="none" stroke="#333" stroke-width="1.2"/><path d="M3 6.4V3.4H6A2 2 0 0 1 10 3.4H12.8V6.4Z" fill="none" stroke="#333" stroke-width="1.2"/><path d="M10.6 10.6V20.4H19.4V10.6" fill="none" stroke="#333" stroke-width="1.2"/><rect x="12.4" y="10.6" width="5" height="7.6" fill="none" stroke="#2d6ae8" stroke-width="1.2"/></svg>
<svg style="left:555px;top:332px;" width="21" height="21" viewBox="0 0 21 21"><path d="M2.6 3.2H0.6V20.4H8.4" fill="none" stroke="#333" stroke-width="1.2"/><path d="M13.6 3.2H15.4V8.2" fill="none" stroke="#333" stroke-width="1.2"/><path d="M3 6.4V3.4H6A2 2 0 0 1 10 3.4H12.8V6.4Z" fill="none" stroke="#333" stroke-width="1.2"/><path d="M9 20.6L10.2 17.6L12 19.2Z" fill="none" stroke="#d4581c" stroke-width="1.1"/><path d="M10.6 17.4L19.4 9.6M12.2 19.2L19.6 12.6" stroke="#d4581c" stroke-width="1.1"/></svg>
<svg style="left:589px;top:332px;" width="21" height="21" viewBox="0 0 21 21"><path d="M2.6 3.2H0.6V20.4H8.4" fill="none" stroke="#333" stroke-width="1.2"/><path d="M13.6 3.2H15.4V8.2" fill="none" stroke="#333" stroke-width="1.2"/><path d="M3 6.4V3.4H6A2 2 0 0 1 10 3.4H12.8V6.4Z" fill="none" stroke="#333" stroke-width="1.2"/><path d="M11.4 20.6L15 10.4L18.6 20.6M12.6 17.2H17.4" fill="none" stroke="#2d6ae8" stroke-width="1.2"/></svg>
<svg style="left:623px;top:332px;" width="21" height="21" viewBox="0 0 21 21"><path d="M2.6 3.2H0.6V20.4H8.4" fill="none" stroke="#333" stroke-width="1.2"/><path d="M13.6 3.2H15.4V8.2" fill="none" stroke="#333" stroke-width="1.2"/><path d="M3 6.4V3.4H6A2 2 0 0 1 10 3.4H12.8V6.4Z" fill="none" stroke="#333" stroke-width="1.2"/><path d="M11.6 11.4H12.8M11.6 14.6H12.8M11.6 17.8H12.8" stroke="#2d6ae8" stroke-width="1.2"/><path d="M14.2 11.4H19.4M14.2 14.6H19.4M14.2 17.8H19.4" stroke="#2d6ae8" stroke-width="1.2"/></svg>
<div class="a" style="left:454px;top:362px;width:211px;height:1px;background:#dedede"></div>
<svg style="left:454px;top:375px;" width="14" height="14" viewBox="0 0 14 14"><circle cx="7" cy="7" r="6.2" fill="none" stroke="#555" stroke-width="1"/><path d="M3.8 10.6L7 3.4L10.2 10.6M5 8H9" fill="none" stroke="#555" stroke-width="1"/></svg>
<div class="t" style="left:475.10px;top:376.15px;font-size:11.63px;color:#222;transform:scaleX(0.9559);">Font...</div>
<div class="t" style="left:631.10px;top:376.15px;font-size:11.63px;color:#8a8a8a;transform:scaleX(0.9950);">Ctrl+D</div>
<svg style="left:454px;top:408px;" width="14" height="16" viewBox="0 0 14 16"><path d="M1 1.3H13" stroke="#444" stroke-width="1.1"/><path d="M1 5.5H13" stroke="#888" stroke-width="1.1"/><path d="M1 10H5M1 14.5H5" stroke="#444" stroke-width="1.1"/><path d="M8 8.4H13M11.2 8.4V15M12.4 8.4V15" stroke="#2d6ae8" stroke-width="1.1"/><path d="M9.5 8.6A1.8 1.8 0 0 0 10.4 12Z" fill="#2d6ae8"/></svg>
<div class="t" style="left:475.10px;top:410.15px;font-size:11.63px;color:#222;transform:scaleX(0.9533);">Paragraph...</div>
<svg style="left:455px;top:445px;" width="13" height="11" viewBox="0 0 13 11"><circle cx="1.4" cy="1.4" r="0.9" fill="#555"/><circle cx="1.4" cy="5.4" r="0.9" fill="#555"/><circle cx="1.4" cy="9" r="0.9" fill="#555"/><path d="M4 1.4H12M4 5.4H12M4 9H12" stroke="#555" stroke-width="1"/></svg>
<div class="t" style="left:475.10px;top:444.15px;font-size:11.63px;color:#222;transform:scaleX(0.9896);">Bullets and Numbering...</div>
<div class="a" style="left:454px;top:469px;width:211px;height:1px;background:#dedede"></div>
<svg style="left:455px;top:482px;" width="12" height="14" viewBox="0 0 12 14"><path d="M4.6 4.2V2.2A1.4 1.4 0 0 1 7.4 2.2V4.2" fill="none" stroke="#555" stroke-width="1"/><path d="M1.2 4.4H10.8V6.8H1.2Z" fill="none" stroke="#555" stroke-width="1"/><path d="M2 6.2H10" stroke="#e8742c" stroke-width="0.9"/><path d="M1.6 6.8L0.8 12.6H10L10.8 6.8" fill="none" stroke="#555" stroke-width="1"/><path d="M8.4 9.5L7.8 12.4" stroke="#555" stroke-width="0.9"/></svg>
<div class="t" style="left:475.10px;top:482.75px;font-size:11.63px;color:#222;transform:scaleX(0.9715);">Format Painter</div>
<div class="a" style="left:635px;top:480px;width:1px;height:18px;background:#dcdcdc"></div>
<svg style="left:649px;top:481px;" width="16" height="15" viewBox="0 0 16 15"><path d="M4.4 5V2.3A1.2 1.2 0 0 1 6.8 2.3V5M9.6 5V1.3A1.2 1.2 0 0 1 12 1.3V5" fill="none" stroke="#444" stroke-width="1"/><path d="M1.2 5.2H14V8.4H1.2Z M1.4 8.4L0.9 13.6H13.6L14 8.4" fill="none" stroke="#444" stroke-width="1"/></svg>
<div class="a" style="left:454px;top:508px;width:211px;height:1px;background:#dedede"></div>
<svg style="left:454px;top:521px;" width="15" height="14" viewBox="0 0 15 14"><path d="M6.2 2.2L5.2 1.2A2.6 2.6 0 0 0 1.4 5L4.6 8.2A2.6 2.6 0 0 0 8.4 8.2" fill="none" stroke="#555" stroke-width="1"/><path d="M7.6 4.6A2.6 2.6 0 0 1 11.4 5.2L13.6 7.8A2.6 2.6 0 0 1 9.8 11.6L9 10.8" fill="none" stroke="#555" stroke-width="1"/><path d="M6.2 5.4A2.6 2.6 0 0 0 6.4 9" fill="none" stroke="#555" stroke-width="1"/></svg>
<div class="t" style="left:475.10px;top:522.35px;font-size:11.63px;color:#222;transform:scaleX(0.9802);">Hyperlink...</div>
<div class="t" style="left:631.60px;top:522.35px;font-size:11.63px;color:#8a8a8a;transform:scaleX(0.9961);">Ctrl+K</div>
<svg style="left:455px;top:555px;" width="13" height="13" viewBox="0 0 13 13"><path d="M3 11.4H0.6V0.6H11.6V6.6" fill="none" stroke="#444" stroke-width="1"/><path d="M3 11.4L1.4 12.6" stroke="#444" stroke-width="1"/><path d="M3 11.4H6.6" stroke="#444" stroke-width="1"/><path d="M9.8 8.6V13M7.6 10.8H12" stroke="#1a9a8a" stroke-width="1"/></svg>
<div class="t" style="left:475.10px;top:555.75px;font-size:11.63px;color:#222;transform:scaleX(0.9754);">New Comment</div>
<div class="a" style="left:454px;top:581px;width:211px;height:1px;background:#dedede"></div>
<div class="t" style="left:475.10px;top:594.95px;font-size:11.63px;color:#222;transform:scaleX(0.9212);">Synonyms</div>
<svg style="left:657px;top:596px;" width="6" height="11" viewBox="0 0 6 11"><path d="M0.6 0.6L5.2 5.4L0.6 10.2" fill="none" stroke="#555" stroke-width="1.1"/></svg>
<svg style="left:454px;top:629px;" width="15" height="13" viewBox="0 0 15 13"><rect x="0.6" y="0.6" width="13.4" height="11.6" fill="#f4f4f4" stroke="#444" stroke-width="1.1"/><path d="M7.3 1V4M7.3 8.6V12M3 6.4H11.6M4.6 4.8L3 6.4L4.6 8M10 4.8L11.6 6.4L10 8" fill="none" stroke="#333" stroke-width="0.8"/><path d="M2 2.6H4M10.4 2.6H12.6M2 10.2H4M10.4 10.2H12.6" stroke="#888" stroke-width="0.8"/></svg>
<div class="t" style="left:475.10px;top:629.05px;font-size:11.63px;color:#222;transform:scaleX(0.9439);">Thesaurus...</div>
<div class="t" style="left:620.60px;top:629.05px;font-size:11.63px;color:#8a8a8a;transform:scaleX(1.0085);">Shift+F7</div>
<div class="a" style="left:522px;top:368px;width:42px;height:20px;background:#a2a2a2;filter:blur(0.6px)"></div>
<div class="a" style="left:515px;top:361px;width:46px;height:24px;background:#fff;border:1px solid #9c9c9c"></div>
<div class="t" style="left:524.40px;top:366.75px;font-size:11.63px;color:#3c4660;transform:scaleX(0.8745);">Paste</div>
<svg style="left:1327px;top:163px;" width="9" height="9" viewBox="0 0 9 9"><path d="M0.8 0.6H8.2L4.5 4.2Z" fill="#555"/><path d="M0.6 5.6V8.2H8.4V5.6M3.2 6.8V8.2M5.8 6.8V8.2" fill="none" stroke="#555" stroke-width="1.2"/></svg>
<svg style="left:1328px;top:181px;" width="7" height="5" viewBox="0 0 7 5"><path d="M0 4.6L3.5 0.4L7 4.6Z" fill="#666"/></svg>
<div class="a" style="left:1327px;top:195px;width:8px;height:206px;background:#d0d0d0;border-radius:4px"></div>
<svg style="left:1328px;top:641px;" width="7" height="5" viewBox="0 0 7 5"><path d="M0 0.4L3.5 4.6L7 0.4Z" fill="#666"/></svg>
<svg style="left:1328px;top:656px;" width="7" height="9" viewBox="0 0 7 9"><path d="M0 3.8L3.5 0.4L7 3.8Z M0 8.4L3.5 5L7 8.4Z" fill="#777"/></svg>
<svg style="left:1328px;top:672px;" width="7" height="7" viewBox="0 0 7 7"><rect x="1" y="1" width="5" height="5" rx="1" fill="none" stroke="#666" stroke-width="1.4"/></svg>
<svg style="left:1328px;top:687px;" width="7" height="9" viewBox="0 0 7 9"><path d="M0 0.4L3.5 3.8L7 0.4Z M0 5L3.5 8.4L7 5Z" fill="#777"/></svg>
<div class="a" style="left:1339px;top:107px;width:27px;height:1px;background:#e0e0e0"></div>
<div class="a" style="left:0px;top:108px;width:13px;height:1px;background:#e0e0e0"></div>
<svg style="left:1339px;top:129px;" width="6" height="26" viewBox="0 0 6 26"><path d="M0 0.6A17.4 17.4 0 0 1 0 25Z" fill="#b83a10"/></svg>
<svg style="left:1339px;top:184px;" width="10" height="36" viewBox="0 0 10 36"><path d="M0 0.6A20 20 0 0 1 0 35Z" fill="#e9edf8"/></svg>
<div class="a" style="left:1339px;top:250px;width:11px;height:1px;background:#b8b8b8"></div>
<div class="a" style="left:1353px;top:277px;width:9px;height:21px;background:#dcdde0;border-radius:5px"></div>
<div class="t" style="left:0.5px;top:258.5px;font-size:11px;color:#333;transform:rotate(-90deg);transform-origin:0 0">4</div>
<div class="t" style="left:0.5px;top:364.3px;font-size:11px;color:#333;transform:rotate(-90deg);transform-origin:0 0">5</div>
<div class="t" style="left:0.5px;top:470.1px;font-size:11px;color:#333;transform:rotate(-90deg);transform-origin:0 0">6</div>
<div class="t" style="left:0.5px;top:575.9px;font-size:11px;color:#333;transform:rotate(-90deg);transform-origin:0 0">7</div>
<div class="t" style="left:0.5px;top:681.7px;font-size:11px;color:#333;transform:rotate(-90deg);transform-origin:0 0">8</div>
<div class="a" style="left:13px;top:704px;width:1326px;height:24px;background:#eeeeee;border-top:1px solid #d9d9d9"></div>
<div class="t" style="left:28.80px;top:710.90px;font-size:11.92px;color:#333;transform:scaleX(0.9035);">Page: 1/1</div>
<div class="a" style="left:88px;top:709px;width:1px;height:14px;background:#d6d6d6"></div>
<div class="t" style="left:100.60px;top:710.90px;font-size:11.92px;color:#333;transform:scaleX(0.9690);">Words: 0</div>
<div class="a" style="left:159px;top:709px;width:1px;height:14px;background:#d6d6d6"></div>
<svg style="left:177px;top:710px;" width="17" height="13" viewBox="0 0 17 13"><text x="0" y="6.6" font-size="7.6" font-family="Liberation Sans" fill="#333" textLength="16" lengthAdjust="spacingAndGlyphs">ABC</text><path d="M2.8 9.2L5 11.8L9 7.6" fill="none" stroke="#333" stroke-width="1.1"/></svg>
<div class="t" style="left:196.10px;top:710.50px;font-size:11.92px;color:#333;transform:scaleX(0.9116);">Spell Check</div>
<svg style="left:265px;top:714px;" width="4" height="6" viewBox="0 0 4 6"><path d="M0 0.5L3.2 3L0 5.5Z" fill="#5a6aa8"/></svg>
<svg style="left:798px;top:710px;" width="12" height="13" viewBox="0 0 12 13"><rect x="0.6" y="2.6" width="9.4" height="9.8" fill="none" stroke="#666" stroke-width="1"/><path d="M2.6 2.6V0.6H11.4V10.4H10" fill="none" stroke="#aaa" stroke-width="1"/><path d="M4 5.4V9H6.8" fill="none" stroke="#555" stroke-width="1"/></svg>
<svg style="left:831px;top:709px;" width="17" height="15" viewBox="0 0 17 15"><path d="M5 4V0.6H13.6V14.2H5V11" fill="none" stroke="#444" stroke-width="1.1"/><path d="M5 11.4H13.6" stroke="#444" stroke-width="1"/><path d="M0 6.6H9M6.4 4L9 6.6L6.4 9.2" fill="none" stroke="#444" stroke-width="1.1"/></svg>
<div class="a" style="left:856px;top:709px;width:1px;height:15px;background:#d6d6d6"></div>
<div class="a" style="left:865px;top:705px;width:24px;height:22px;background:#dcdcdc;border-radius:4px"></div>
<svg style="left:871px;top:711px;" width="12" height="12" viewBox="0 0 12 12"><rect x="0.6" y="0.6" width="10.6" height="10.6" rx="1" fill="none" stroke="#555" stroke-width="1.1"/><path d="M3 4H8.8M3 7.2H7" stroke="#555" stroke-width="1.1"/></svg>
<svg style="left:903px;top:711px;" width="12" height="12" viewBox="0 0 12 12"><rect x="0.6" y="0.6" width="10.6" height="10.6" rx="1" fill="none" stroke="#555" stroke-width="1.1"/><path d="M4.4 0.6V11.2M6.4 3.4H9.2M6.4 6H9.2M6.4 8.6H9.2M2 3.4H3M2 6H3" stroke="#555" stroke-width="1"/></svg>
<svg style="left:936px;top:710px;" width="10" height="13" viewBox="0 0 10 13"><path d="M0.7 0.8L9.2 6.5L0.7 12.2Z" fill="none" stroke="#555" stroke-width="1.1" stroke-linejoin="round"/></svg>
<svg style="left:967px;top:711px;" width="12" height="12" viewBox="0 0 12 12"><circle cx="6" cy="6" r="5.3" fill="none" stroke="#444" stroke-width="1.1"/><ellipse cx="6" cy="6" rx="2.4" ry="5.3" fill="none" stroke="#444" stroke-width="1"/><path d="M0.8 4.2H11.2M0.8 7.8H11.2" stroke="#444" stroke-width="1"/></svg>
<svg style="left:999px;top:711px;" width="15" height="10" viewBox="0 0 15 10"><path d="M0.6 5A7.4 5.2 0 0 1 14.4 5A7.4 5.2 0 0 1 0.6 5Z" fill="none" stroke="#555" stroke-width="1.1"/><circle cx="7.5" cy="5.4" r="2.3" fill="none" stroke="#555" stroke-width="1.1"/></svg>
<svg style="left:1019px;top:715px;" width="6" height="4" viewBox="0 0 6 4"><path d="M0.7 0.7L3 3.1L5.3 0.7" fill="none" stroke="#555" stroke-width="1.6"/></svg>
<div class="a" style="left:1038px;top:709px;width:1px;height:15px;background:#d6d6d6"></div>
<svg style="left:1051px;top:709px;" width="15" height="15" viewBox="0 0 15 15"><path d="M0.6 4V0.6H4M11 0.6H14.4V4M14.4 11V14.4H11M4 14.4H0.6V11" fill="none" stroke="#444" stroke-width="1.1"/><rect x="3" y="3" width="9" height="9" fill="none" stroke="#444" stroke-width="1.1"/><path d="M3 5.6H12" stroke="#444" stroke-width="1"/></svg>
<div class="t" style="left:1083.90px;top:710.90px;font-size:11.92px;color:#3a3f5a;transform:scaleX(0.8626);">100%</div>
<svg style="left:1123px;top:715px;" width="6" height="4" viewBox="0 0 6 4"><path d="M0.7 0.7L3 3.1L5.3 0.7" fill="none" stroke="#444" stroke-width="1.6"/></svg>
<div class="a" style="left:1144px;top:715px;width:10px;height:2px;background:#333"></div>
<div class="a" style="left:1212px;top:712px;width:9px;height:9px;background:#fff;border:1px solid #e0e0e0;border-radius:50%"></div>
<div class="a" style="left:1215px;top:715px;width:3px;height:3px;background:#777;border-radius:50%"></div>
<svg style="left:1279px;top:711px;" width="10" height="10" viewBox="0 0 10 10"><path d="M4.8 0V10M0 5H9.6" stroke="#333" stroke-width="1.8"/></svg>
<svg style="left:1310px;top:710px;" width="11" height="11" viewBox="0 0 11 11"><path d="M0.6 3.6V0.6H3.6M7.4 0.6H10.4V3.6M10.4 7.4V10.4H7.4M3.6 10.4H0.6V7.4M1.4 9.6L9.6 1.4" fill="none" stroke="#444" stroke-width="1.1"/></svg>
<div class="a" style="left:1340px;top:675px;width:40px;height:44px;background:#fff;border-radius:22px;box-shadow:-1px 0 3px rgba(0,0,0,0.15)"></div>
<svg style="left:1351px;top:690px;" width="6" height="11" viewBox="0 0 6 11"><path d="M5.4 0.6L0.8 5.5L5.4 10.4" fill="none" stroke="#444" stroke-width="1.3"/></svg>
<div class="a" style="left:1339px;top:0px;width:8px;height:728px;background:linear-gradient(90deg,rgba(0,0,0,0.22),rgba(0,0,0,0.04) 45%,rgba(0,0,0,0))"></div>
<div class="a" style="left:0px;top:728px;width:1366px;height:40px;background:linear-gradient(90deg,#233b46 0%,#223a46 40%,#203447 62%,#1d2e47 80%,#1b2a47 100%)"></div>
<div class="a" style="left:1361px;top:728px;width:1px;height:40px;background:#6c7a92"></div>
<svg style="left:15px;top:739px;" width="18" height="18" viewBox="0 0 18 18"><path d="M0.8 2.2L7 1.4V8.4H0.8Z M8 1.3L17.1 0.8V8.4H8Z M0.8 9.3H7V16.2L0.8 15.4Z M8 9.3H17.1V17.1L8 16.3Z" fill="#fff"/></svg>
<div class="a" style="left:48px;top:728px;width:287px;height:40px;background:#f1f1f1"></div>
<svg style="left:60px;top:740px;" width="17" height="17" viewBox="0 0 17 17"><circle cx="10.6" cy="6.4" r="5.6" fill="none" stroke="#222" stroke-width="1.3"/><path d="M6.6 10.4L0.8 16.2" stroke="#222" stroke-width="1.4"/></svg>
<div class="t" style="left:88.10px;top:740.55px;font-size:15.41px;color:#2b2b2b;transform:scaleX(0.9327);">Type here to search</div>
<div class="a" style="left:48px;top:728px;width:287px;height:1px;background:#cfcfcf"></div>
<svg style="left:250px;top:726px;" width="86" height="42" viewBox="0 0 86 42"><defs><linearGradient id="lens" x1="0" y1="0" x2="0" y2="1"><stop offset="0" stop-color="#777"/><stop offset="0.5" stop-color="#aaa"/><stop offset="1" stop-color="#3a3a3a"/></linearGradient></defs><path d="M10 27L12 19L16 11L19 5L23 6L25 13L23 21L21 28L22 34L18 35L13 33Z" fill="#d8813c"/><path d="M20 24L22 30L20 33Z" fill="#b8501c"/><path d="M22 35L24 28L30 22L36 17L37 12L34 9L38 8L43 10L48 11L49 14L52 16L51 18L47 19L50 24L52 29L49 30L44 26L40 28L36 32L35 38L31 41L26 39Z" fill="#e2904c"/><path d="M30 28L38 24L42 26L36 31Z" fill="#c98a66"/><circle cx="43.6" cy="12" r="0.9" fill="#222"/><rect x="52" y="14" width="16" height="15" rx="2" fill="url(#lens)"/><path d="M57 14V29M63 15V28" stroke="#333" stroke-width="1"/><rect x="67" y="12" width="16" height="17" rx="1.5" fill="#4c4c4c"/><rect x="68" y="9" width="14" height="4" rx="1.5" fill="#5c5c5c"/><rect x="72" y="30" width="8" height="5" fill="#6a6a6a"/><rect x="74" y="35" width="3" height="7" fill="#9a9a9a"/></svg>
<svg style="left:352px;top:740px;" width="17" height="16" viewBox="0 0 17 16"><path d="M1 0.6H10.4M1 15.2H10.4" stroke="#fff" stroke-width="1.1"/><rect x="1.5" y="4" width="8.5" height="8" fill="none" stroke="#fff" stroke-width="1.2"/><path d="M15 0.5V2.5M15 4.5V15.6" stroke="#fff" stroke-width="1.2"/><rect x="13.8" y="5" width="2.4" height="3.5" fill="#fff"/></svg>
<svg style="left:399px;top:736px;" width="25" height="25" viewBox="0 0 25 25"><defs><linearGradient id="eg1" x1="0" y1="0" x2="1" y2="1"><stop offset="0" stop-color="#35c1f1"/><stop offset="0.5" stop-color="#2fa6d8"/><stop offset="1" stop-color="#7fd34e"/></linearGradient><linearGradient id="eg2" x1="0" y1="0" x2="0" y2="1"><stop offset="0" stop-color="#1d7fd6"/><stop offset="1" stop-color="#0c4fa8"/></linearGradient></defs><circle cx="12.5" cy="12.5" r="12" fill="url(#eg1)"/><path d="M0.5 12.5A12 12 0 0 0 20 22C14 24 8 20 9 14C10 10 14 9 17 11C15 7 9 6 5 9C2 11 1 12 0.5 12.5Z" fill="url(#eg2)"/><path d="M9 14C9 18 12 21 17 21C20 21 23 19 24 17C22 18 18 19 15 17C12 15 12 13 13 11C11 11 9 12 9 14Z" fill="#1a5fb0"/></svg>
<svg style="left:448px;top:737px;" width="24" height="24" viewBox="0 0 24 24"><path d="M7 6V3A5 3 0 0 1 17 3V6" fill="none" stroke="#39a6e8" stroke-width="1.8"/><rect x="0.5" y="5.5" width="23" height="18" rx="3.5" fill="#f3f3f3"/><rect x="7.5" y="10.5" width="4" height="4" fill="#f25022"/><rect x="12.5" y="10.5" width="4" height="4" fill="#7fba00"/><rect x="7.5" y="15.5" width="4" height="4" fill="#00a4ef"/><rect x="12.5" y="15.5" width="4" height="4" fill="#ffb900"/></svg>
<svg style="left:497px;top:737px;" width="25" height="23" viewBox="0 0 25 23"><path d="M0.5 8L12.5 0.5L24.5 8V22.5H0.5Z" fill="#0e6fc8"/><path d="M4 6H21V14L12.5 18L4 14Z" fill="#e8eef5"/><path d="M0.5 8L12.5 15L24.5 8V22.5H0.5Z" fill="#2fb2f0"/><path d="M0.5 22.5L12.5 13L24.5 22.5Z" fill="#1f93de"/></svg>
<svg style="left:546px;top:739px;" width="24" height="19" viewBox="0 0 24 19"><path d="M0.5 2.5A2 2 0 0 1 2.5 0.5H9L11 2.5H21.5A2 2 0 0 1 23.5 4.5V16.5A2 2 0 0 1 21.5 18.5H2.5A2 2 0 0 1 0.5 16.5Z" fill="#f8cf58"/><path d="M0.5 4.5H23.5" stroke="#e0a82a" stroke-width="1"/><path d="M7 18.5V12H17V18.5H14.5V14.5H9.5V18.5Z" fill="#3a8ee6"/></svg>
<div class="a" style="left:632px;top:728px;width:48px;height:38px;background:#4a5a63"></div>
<div class="a" style="left:632px;top:766px;width:48px;height:2px;background:#76b9ed"></div>
<svg style="left:644px;top:736px;" width="24" height="24" viewBox="0 0 24 24"><defs><linearGradient id="wpg" x1="0" y1="0" x2="0.6" y2="1"><stop offset="0" stop-color="#9a5cf6"/><stop offset="0.5" stop-color="#e03aa0"/><stop offset="1" stop-color="#ff2a4a"/></linearGradient></defs><circle cx="12" cy="12" r="12" fill="url(#wpg)"/><path d="M4.6 8.2H9.2L11.8 15L14.2 8.2H18L13.6 18.6H10.4L8.2 13L7.2 15.2Z" fill="none" stroke="#fff" stroke-width="1.9" stroke-linejoin="round"/><circle cx="18.4" cy="5.4" r="1.3" fill="#fff"/><circle cx="20.2" cy="7.6" r="0.7" fill="#fff"/></svg>
<div class="a" style="left:685px;top:766px;width:40px;height:2px;background:#76b9ed"></div>
<svg style="left:693px;top:736px;" width="26" height="26" viewBox="0 0 26 26"><circle cx="12" cy="12" r="12" fill="#db4437"/><path d="M12 12L1.6 6A12 12 0 0 0 6 22.4Z" fill="#0f9d58"/><path d="M12 12L22.4 6A12 12 0 0 1 18 22.4Z" fill="#ffcd40"/><circle cx="12" cy="12" r="5.2" fill="#fff"/><circle cx="12" cy="12" r="4.2" fill="#4285f4"/><circle cx="18" cy="18" r="7.6" fill="#c2410c"/><text x="18" y="21.6" font-size="9.5" text-anchor="middle" fill="#fff" font-family="Liberation Sans">M</text></svg>
<svg style="left:942px;top:737px;" width="24" height="24" viewBox="0 0 24 24"><ellipse cx="12" cy="6" rx="10" ry="3.6" fill="#f4a21a"/><path d="M2 6V11A10 3.6 0 0 0 22 11V6" fill="#e8901a"/><ellipse cx="12" cy="12" rx="6" ry="3" fill="#f7b53a"/><path d="M8 19L12 15.5L16 19L14.6 20L12 17.6L9.4 20Z" fill="#38c24a"/><path d="M6 14A8 3 0 0 0 18 14V16A8 3 0 0 1 6 16Z" fill="#f4a21a"/></svg>
<div class="t" style="left:973.50px;top:740.47px;font-size:15.26px;color:#fff;transform:scaleX(0.8417);">USD/PKR</div>
<div class="t" style="left:1039.60px;top:740.47px;font-size:15.26px;color:#3cc13c;transform:scaleX(0.8624);">+0.42%</div>
<svg style="left:1111px;top:746px;" width="13" height="7" viewBox="0 0 13 7"><path d="M0.6 6.4L6.5 0.8L12.4 6.4" fill="none" stroke="#fff" stroke-width="1.2"/></svg>
<div class="a" style="left:1133px;top:740px;width:17px;height:17px;background:#e8f1fc;border-radius:3px"></div>
<svg style="left:1135px;top:743px;" width="13" height="10" viewBox="0 0 13 10"><path d="M3 9.4A2.6 2.6 0 0 1 2.6 4.2A4 4 0 0 1 10.2 3.4A3 3 0 0 1 10.4 9.4Z" fill="none" stroke="#2f7ee8" stroke-width="1.3"/><path d="M6.5 5.5V9M5 7.5L6.5 9L8 7.5" fill="none" stroke="#2f7ee8" stroke-width="0.9"/></svg>
<svg style="left:1160px;top:741px;" width="14" height="15" viewBox="0 0 14 15"><rect x="0.6" y="3" width="8.6" height="8.6" rx="2" fill="none" stroke="#fff" stroke-width="1.1"/><path d="M9.2 6L13.2 3.8V10.8L9.2 8.6" fill="none" stroke="#fff" stroke-width="1.1"/><path d="M2 0.6H8M2 14.2H8" stroke="#fff" stroke-width="1"/></svg>
<svg style="left:1181px;top:742px;" width="17" height="13" viewBox="0 0 17 13"><path d="M0 4H3M3 2V6M3 3H6M3 5H6" stroke="#fff" stroke-width="1.1"/><rect x="6.6" y="2.6" width="9" height="8" fill="none" stroke="#fff" stroke-width="1.1"/><rect x="8" y="4" width="4" height="5.2" fill="#fff"/><path d="M16.4 5V8" stroke="#fff" stroke-width="1.4"/></svg>
<svg style="left:1207px;top:741px;" width="16" height="16" viewBox="0 0 16 16"><path d="M1 15A14 14 0 0 1 15 1M4.2 15A10.8 10.8 0 0 1 15 4.2M7.4 15A7.6 7.6 0 0 1 15 7.4M10.6 15A4.4 4.4 0 0 1 15 10.6" fill="none" stroke="#fff" stroke-width="1.1" stroke-dasharray="0"/><circle cx="14" cy="14" r="1.4" fill="#fff"/></svg>
<svg style="left:1229px;top:741px;" width="17" height="15" viewBox="0 0 17 15"><path d="M0.6 5H3.6L8 1V14L3.6 10H0.6Z" fill="none" stroke="#fff" stroke-width="1.1"/><path d="M10.4 4.6A4 4 0 0 1 10.4 10.4M12.6 2.6A6.6 6.6 0 0 1 12.6 12.4M14.6 1A9 9 0 0 1 14.6 14" fill="none" stroke="#fff" stroke-width="1.1"/></svg>
<div class="t" style="left:1256.30px;top:731.90px;font-size:13.23px;color:#fff;transform:scaleX(0.8742);">11:39 AM</div>
<div class="t" style="left:1254.80px;top:749.82px;font-size:13.08px;color:#fff;transform:scaleX(0.8849);">8/19/2023</div>
<svg style="left:1325px;top:738px;" width="24" height="28" viewBox="0 0 24 28"><path d="M0.6 0.6H18.4V13H9L5.6 17V13H0.6Z" fill="#fff"/><path d="M4 4.6H15M4 7.6H15M4 10.4H11" stroke="#1f3341" stroke-width="1.1"/><circle cx="15" cy="19" r="8" fill="#2b2b2b" stroke="#777" stroke-width="1"/><text x="15" y="23" font-size="11" text-anchor="middle" fill="#fff" font-family="Liberation Sans" font-weight="bold">6</text></svg>
</body></html>
